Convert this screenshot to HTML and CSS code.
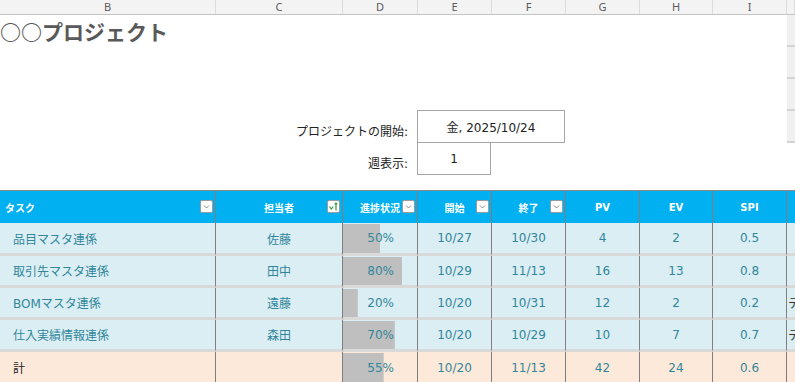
FILE: index.html
```html
<!DOCTYPE html>
<html>
<head>
<meta charset="utf-8">
<title>○○プロジェクト</title>
<link rel="stylesheet" href="styles.css">
</head>
<body>
	<!-- 列見出し -->
	<div class="colbar">
		<div>B</div><div>C</div><div>D</div><div>E</div><div>F</div><div>G</div><div>H</div><div>I</div><div></div>
	</div>

	<div class="top">
		<div class="top-main">
			<h1 class="title">○○プロジェクト</h1>
			<div class="params">
				<div class="param-label">プロジェクトの開始:</div>
				<div class="param-box wide">金, 2025/10/24</div>
				<div class="param-label">週表示:</div>
				<div class="param-box week">1</div>
			</div>
		</div>
		<div class="side-strip"><div></div><div></div><div></div><div></div></div>
	</div>

	<!-- タスク表 -->
	<div class="task-table">
		<div class="th left">タスク<span class="filter"><svg viewBox="0 0 11 11"><polyline points="3,4.5 5.5,7 8,4.5" /></svg></span></div>
		<div class="th">担当者<span class="filter"><svg viewBox="0 0 11 11" class="sort"><polyline points="1.5,5.5 3.3,8 5.1,5.5" /><line x1="8" y1="2" x2="8" y2="9.5" /><polyline points="6.6,3.4 8,2 9.4,3.4" /></svg></span></div>
		<div class="th">進捗状況<span class="filter"><svg viewBox="0 0 11 11"><polyline points="3,4.5 5.5,7 8,4.5" /></svg></span></div>
		<div class="th">開始<span class="filter"><svg viewBox="0 0 11 11"><polyline points="3,4.5 5.5,7 8,4.5" /></svg></span></div>
		<div class="th">終了<span class="filter"><svg viewBox="0 0 11 11"><polyline points="3,4.5 5.5,7 8,4.5" /></svg></span></div>
		<div class="th">PV</div>
		<div class="th">EV</div>
		<div class="th">SPI</div>
		<div class="th edge"></div>

		<div class="td task">品目マスタ連係</div>
		<div class="td">佐藤</div>
		<div class="td pct" style="--p:50%">50%</div>
		<div class="td">10/27</div>
		<div class="td">10/30</div>
		<div class="td">4</div>
		<div class="td">2</div>
		<div class="td">0.5</div>
		<div class="td edge"></div>

		<div class="td task">取引先マスタ連係</div>
		<div class="td">田中</div>
		<div class="td pct" style="--p:80%">80%</div>
		<div class="td">10/29</div>
		<div class="td">11/13</div>
		<div class="td">16</div>
		<div class="td">13</div>
		<div class="td">0.8</div>
		<div class="td edge"></div>

		<div class="td task">BOMマスタ連係</div>
		<div class="td">遠藤</div>
		<div class="td pct" style="--p:20%">20%</div>
		<div class="td">10/20</div>
		<div class="td">10/31</div>
		<div class="td">12</div>
		<div class="td">2</div>
		<div class="td">0.2</div>
		<div class="td edge">テスト中</div>

		<div class="td task">仕入実績情報連係</div>
		<div class="td">森田</div>
		<div class="td pct" style="--p:70%">70%</div>
		<div class="td">10/20</div>
		<div class="td">10/29</div>
		<div class="td">10</div>
		<div class="td">7</div>
		<div class="td">0.7</div>
		<div class="td edge">テスト中</div>

		<div class="td sum task dark">計</div>
		<div class="td sum"></div>
		<div class="td sum pct" style="--p:55%">55%</div>
		<div class="td sum">10/20</div>
		<div class="td sum">11/13</div>
		<div class="td sum">42</div>
		<div class="td sum">24</div>
		<div class="td sum">0.6</div>
		<div class="td sum edge"></div>
	</div>
</body>
</html>
```

FILE: styles.css
```css
/* シート */
*{margin:0;padding:0;box-sizing:border-box;}
body{
	font-family:"DejaVu Sans","Noto Sans CJK JP",sans-serif;
	font-size:12px;
	color:#222;
	background:#fff;
	overflow:hidden;
}

/* 列見出し */
.colbar{
	display:grid;
	grid-template-columns:216px 127px 75px 74px 74px 74px 73px 74px 1fr;
	height:15px;
	background:#f3f3f3;
	border-bottom:1px solid #c4c4c4;
}
.colbar div{
	border-right:1px solid #dcdcdc;
	text-align:center;
	font:11px/14px "Noto Sans",sans-serif;
	color:#5a5a5a;
}

/* 上部 */
.top{
	display:grid;
	grid-template-columns:787px 1fr;
	height:175px;
}
.title{
	padding-top:2px;
	font:bold 21px/28px "Noto Sans CJK JP",sans-serif;
	color:#595959;
}
.params{
	display:grid;
	grid-template-columns:417px 74px 74px;
	grid-template-rows:33px 32px;
	margin-top:65px;
}
.param-label{
	align-self:end;
	text-align:right;
	padding:0 9px 3px 0;
	line-height:16px;
}
.param-box{
	display:flex;
	align-items:center;
	justify-content:center;
	border:1px solid #a6a6a6;
}
.param-box.wide{grid-column:2/4;}
.param-box.week{border-top:0;}

.side-strip div{
	height:32px;
	background:#f0f0f0;
	border-bottom:2px solid #d4d4d4;
}

/* 表 */
.task-table{
	display:grid;
	grid-template-columns:216px 127px 75px 74px 74px 74px 73px 74px 1fr;
	grid-template-rows:33px 33px 32px 32px 32px 31px;
}
.th{
	position:relative;
	display:flex;
	align-items:center;
	justify-content:center;
	background:#00b0f0;
	border-top:1px solid #8a8a8a;
	border-right:1px solid #7f7f7f;
	color:#fff;
	font-size:10px;
	font-weight:bold;
}
.th.left{justify-content:flex-start;padding-left:5px;}
.filter{
	position:absolute;
	right:2px;
	top:9px;
	width:13px;
	height:13px;
	background:#fff;
	border:1px solid #9c9c9c;
	border-radius:2px;
}
.filter svg{display:block;width:11px;height:11px;fill:none;stroke:#8a8a8a;stroke-width:1;}
.filter svg.sort{stroke:#2f9a3a;stroke-width:1.2;}

.td{
	display:flex;
	align-items:center;
	justify-content:center;
	background-color:#daeef3;
	border-right:1px solid #7f7f7f;
	border-bottom:3px solid #d9d9d9;
	color:#31869b;
	white-space:nowrap;
	overflow:hidden;
}
.td.task{justify-content:flex-start;padding-left:13px;}
.td.pct{
	justify-content:flex-end;
	padding-right:23px;
	background-image:linear-gradient(#bfbfbf,#bfbfbf);
	background-repeat:no-repeat;
	background-position:0 1px;
	background-size:var(--p) calc(100% - 1px);
}
.td.sum{background-color:#fde9d9;border-bottom:0;}
.td.dark{color:#222;}
.th.edge,.td.edge{border-right:0;}
.td.edge{justify-content:flex-start;padding-left:1px;color:#333;}
```
